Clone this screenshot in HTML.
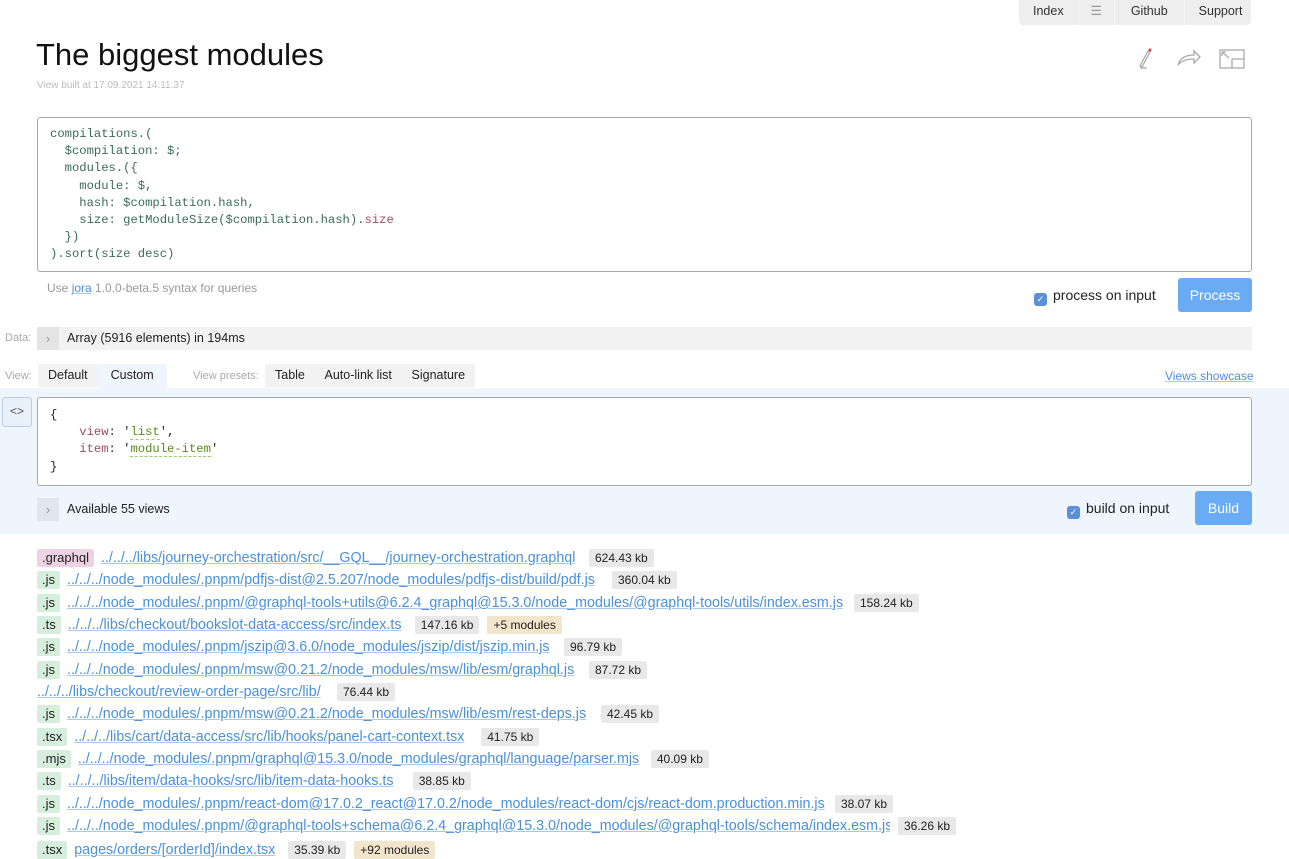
<!DOCTYPE html>
<html><head><meta charset="utf-8"><style>
*{box-sizing:border-box;margin:0;padding:0}
body{width:1289px;height:846px;overflow:hidden;background:#fff;font-family:"Liberation Sans",sans-serif;font-size:13px;color:#222;position:relative}
.abs{position:absolute}
.nav{left:1019px;top:0;width:232px;height:25px;display:flex;background:#eee;border-radius:0 0 4px 4px}
.nav div{padding:0 12px;line-height:22px;font-size:12.5px;color:#333;border-left:1px solid #f8f8f8}
.code{font-family:"Liberation Mono",monospace;font-size:12.2px;line-height:17.2px;white-space:pre}
.box{border:1px solid #aaa;border-radius:3px;background:#fff}
.btn{background:#6aabf5;color:#fff;border-radius:3px;text-align:center;font-size:14px}
.chk{display:inline-block;width:13px;height:13px;background:#5b8fd8;border-radius:3px;vertical-align:-2px;margin-right:6px;color:#fff;font-size:9px;line-height:13px;text-align:center}
a{color:#4a90d9;text-decoration:underline;text-decoration-color:#a9c8ec}
.row{position:absolute;left:37px;height:18px;white-space:nowrap;font-size:14.3px;line-height:18px}
.row span{display:inline-block;vertical-align:top}
.l{background:#d6eedc;padding:0 5px;border-radius:2px;margin-right:7px;color:#222;font-size:13px}
.g{background:#ecd2e2}
.s{background:#e8e8e8;padding:0 6px;border-radius:2px;font-size:12px;margin-left:8px}
.m{background:#f1e5cb;padding:0 6px;border-radius:2px;font-size:12px;margin-left:8px}
.r{overflow:hidden}
.tab{display:inline-block;padding:0 10px;line-height:23px;font-size:12.5px;background:#f2f2f2}
</style></head><body>
<div class="abs nav"><div style="border:0;padding:0 14px">Index</div><div style="color:#999">☰</div><div style="padding:0 16px">Github</div><div style="padding:0 14px">Support</div></div>
<div class="abs" style="left:36px;top:37px;font-size:31px;color:#111">The biggest modules</div>
<div class="abs" style="left:37px;top:80px;font-size:10px;color:#bbb">View built at 17.09.2021 14:11:37</div>
<svg class="abs" style="left:1134px;top:46px" width="112" height="24" viewBox="0 0 112 24" fill="none" stroke="#aaa" stroke-width="1.3">
<path d="M6 20 L14 5 L16 6 L8 21 Z"/><circle cx="16" cy="4" r="1.5" fill="#d44" stroke="none"/><path d="M6 22 H13"/>
<path d="M44 19 C46 12 52 9 60 9 V5 L66 11 L60 17 V13 C54 13 48 14 44 19 Z"/>
<rect x="86" y="4" width="24" height="18"/><path d="M98 13 H110 M98 13 V22 M88 6 L95 12 M88 6 H92 M88 6 V10"/>
</svg>
<div class="abs box code" style="left:37px;top:117px;width:1215px;height:155px;padding:8px 12px;color:#3b6b59">compilations.(
  $compilation: $;
  modules.({
    module: $,
    hash: $compilation.hash,
    size: getModuleSize($compilation.hash).<span style="color:#a04a6a">size</span>
  })
).sort(size desc)</div>
<div class="abs" style="left:47px;top:281px;font-size:12px;color:#999">Use <a>jora</a> 1.0.0-beta.5 syntax for queries</div>
<div class="abs" style="left:1034px;top:287px;font-size:14px"><span class="chk">✓</span>process on input</div>
<div class="abs btn" style="left:1178px;top:278px;width:74px;height:34px;line-height:34px">Process</div>
<div class="abs" style="left:5px;top:332px;font-size:11px;color:#aaa">Data:</div>
<div class="abs" style="left:37px;top:327px;width:1215px;height:23px;background:#f2f2f2"></div>
<div class="abs" style="left:37px;top:327px;width:22px;height:23px;background:#e4e4e4;color:#999;text-align:center;line-height:23px">›</div>
<div class="abs" style="left:67px;top:331px;font-size:12.5px">Array (5916 elements) in 194ms</div>
<div class="abs" style="left:0;top:388px;width:1289px;height:146px;background:#eef5fc"></div>
<div class="abs" style="left:5px;top:370px;font-size:11px;color:#aaa">View:</div>
<div class="abs" style="left:38px;top:364px"><span class="tab">Default</span><span class="tab" style="background:#eef5fc;height:24px;padding:0 13px">Custom</span></div>
<div class="abs" style="left:193px;top:370px;font-size:11px;color:#aaa">View presets:</div>
<div class="abs" style="left:265px;top:364px"><span class="tab">Table</span> <span class="tab" style="margin-left:-4px">Auto-link list</span> <span class="tab" style="margin-left:-4px">Signature</span></div>
<div class="abs" style="left:1165px;top:369px;font-size:12px"><a>Views showcase</a></div>
<div class="abs" style="left:2px;top:397px;width:30px;height:30px;border:1px solid #b8cde6;border-radius:3px;background:#e8f0fa;color:#555;text-align:center;line-height:26px;font-size:12px">&lt;&gt;</div>
<div class="abs box code" style="left:37px;top:397px;width:1215px;height:89px;padding:9px 12px">{
    <span style="color:#a04a6a">view</span>: '<span style="color:#5a8a1a;border-bottom:1px dashed #9c6">list</span>',
    <span style="color:#a04a6a">item</span>: '<span style="color:#5a8a1a;border-bottom:1px dashed #9c6">module-item</span>'
}</div>
<div class="abs" style="left:37px;top:498px;width:22px;height:23px;background:#e0e6ee;color:#999;text-align:center;line-height:23px">›</div>
<div class="abs" style="left:67px;top:502px;font-size:12.5px">Available 55 views</div>
<div class="abs" style="left:1067px;top:500px;font-size:14px"><span class="chk">✓</span>build on input</div>
<div class="abs btn" style="left:1195px;top:491px;width:57px;height:34px;line-height:34px">Build</div>

<div class="row" style="top:549px"><span class="l g">.graphql</span><span class="r" style="width:480px"><a>../../../libs/journey-orchestration/src/__GQL__/journey-orchestration.graphql</a></span><span class="s">624.43 kb</span></div>
<div class="row" style="top:571px"><span class="l">.js</span><span class="r" style="width:537px"><a>../../../node_modules/.pnpm/pdfjs-dist@2.5.207/node_modules/pdfjs-dist/build/pdf.js</a></span><span class="s">360.04 kb</span></div>
<div class="row" style="top:594px"><span class="l">.js</span><span class="r" style="width:779px"><a>../../../node_modules/.pnpm/@graphql-tools+utils@6.2.4_graphql@15.3.0/node_modules/@graphql-tools/utils/index.esm.js</a></span><span class="s">158.24 kb</span></div>
<div class="row" style="top:616px"><span class="l">.ts</span><span class="r" style="width:339px"><a>../../../libs/checkout/bookslot-data-access/src/index.ts</a></span><span class="s">147.16 kb</span><span class="m">+5 modules</span></div>
<div class="row" style="top:638px"><span class="l">.js</span><span class="r" style="width:489px"><a>../../../node_modules/.pnpm/jszip@3.6.0/node_modules/jszip/dist/jszip.min.js</a></span><span class="s">96.79 kb</span></div>
<div class="row" style="top:661px"><span class="l">.js</span><span class="r" style="width:514px"><a>../../../node_modules/.pnpm/msw@0.21.2/node_modules/msw/lib/esm/graphql.js</a></span><span class="s">87.72 kb</span></div>
<div class="row" style="top:683px"><span class="r" style="width:292px"><a>../../../libs/checkout/review-order-page/src/lib/</a></span><span class="s">76.44 kb</span></div>
<div class="row" style="top:705px"><span class="l">.js</span><span class="r" style="width:526px"><a>../../../node_modules/.pnpm/msw@0.21.2/node_modules/msw/lib/esm/rest-deps.js</a></span><span class="s">42.45 kb</span></div>
<div class="row" style="top:728px"><span class="l">.tsx</span><span class="r" style="width:399px"><a>../../../libs/cart/data-access/src/lib/hooks/panel-cart-context.tsx</a></span><span class="s">41.75 kb</span></div>
<div class="row" style="top:750px"><span class="l">.mjs</span><span class="r" style="width:565px"><a>../../../node_modules/.pnpm/graphql@15.3.0/node_modules/graphql/language/parser.mjs</a></span><span class="s">40.09 kb</span></div>
<div class="row" style="top:772px"><span class="l">.ts</span><span class="r" style="width:337px"><a>../../../libs/item/data-hooks/src/lib/item-data-hooks.ts</a></span><span class="s">38.85 kb</span></div>
<div class="row" style="top:795px"><span class="l">.js</span><span class="r" style="width:760px"><a>../../../node_modules/.pnpm/react-dom@17.0.2_react@17.0.2/node_modules/react-dom/cjs/react-dom.production.min.js</a></span><span class="s">38.07 kb</span></div>
<div class="row" style="top:817px"><span class="l">.js</span><span class="r" style="width:823px"><a>../../../node_modules/.pnpm/@graphql-tools+schema@6.2.4_graphql@15.3.0/node_modules/@graphql-tools/schema/index.esm.js</a></span><span class="s">36.26 kb</span></div>
<div class="row" style="top:841px"><span class="l">.tsx</span><span class="r" style="width:206px"><a>pages/orders/[orderId]/index.tsx</a></span><span class="s">35.39 kb</span><span class="m">+92 modules</span></div>
</body></html>
